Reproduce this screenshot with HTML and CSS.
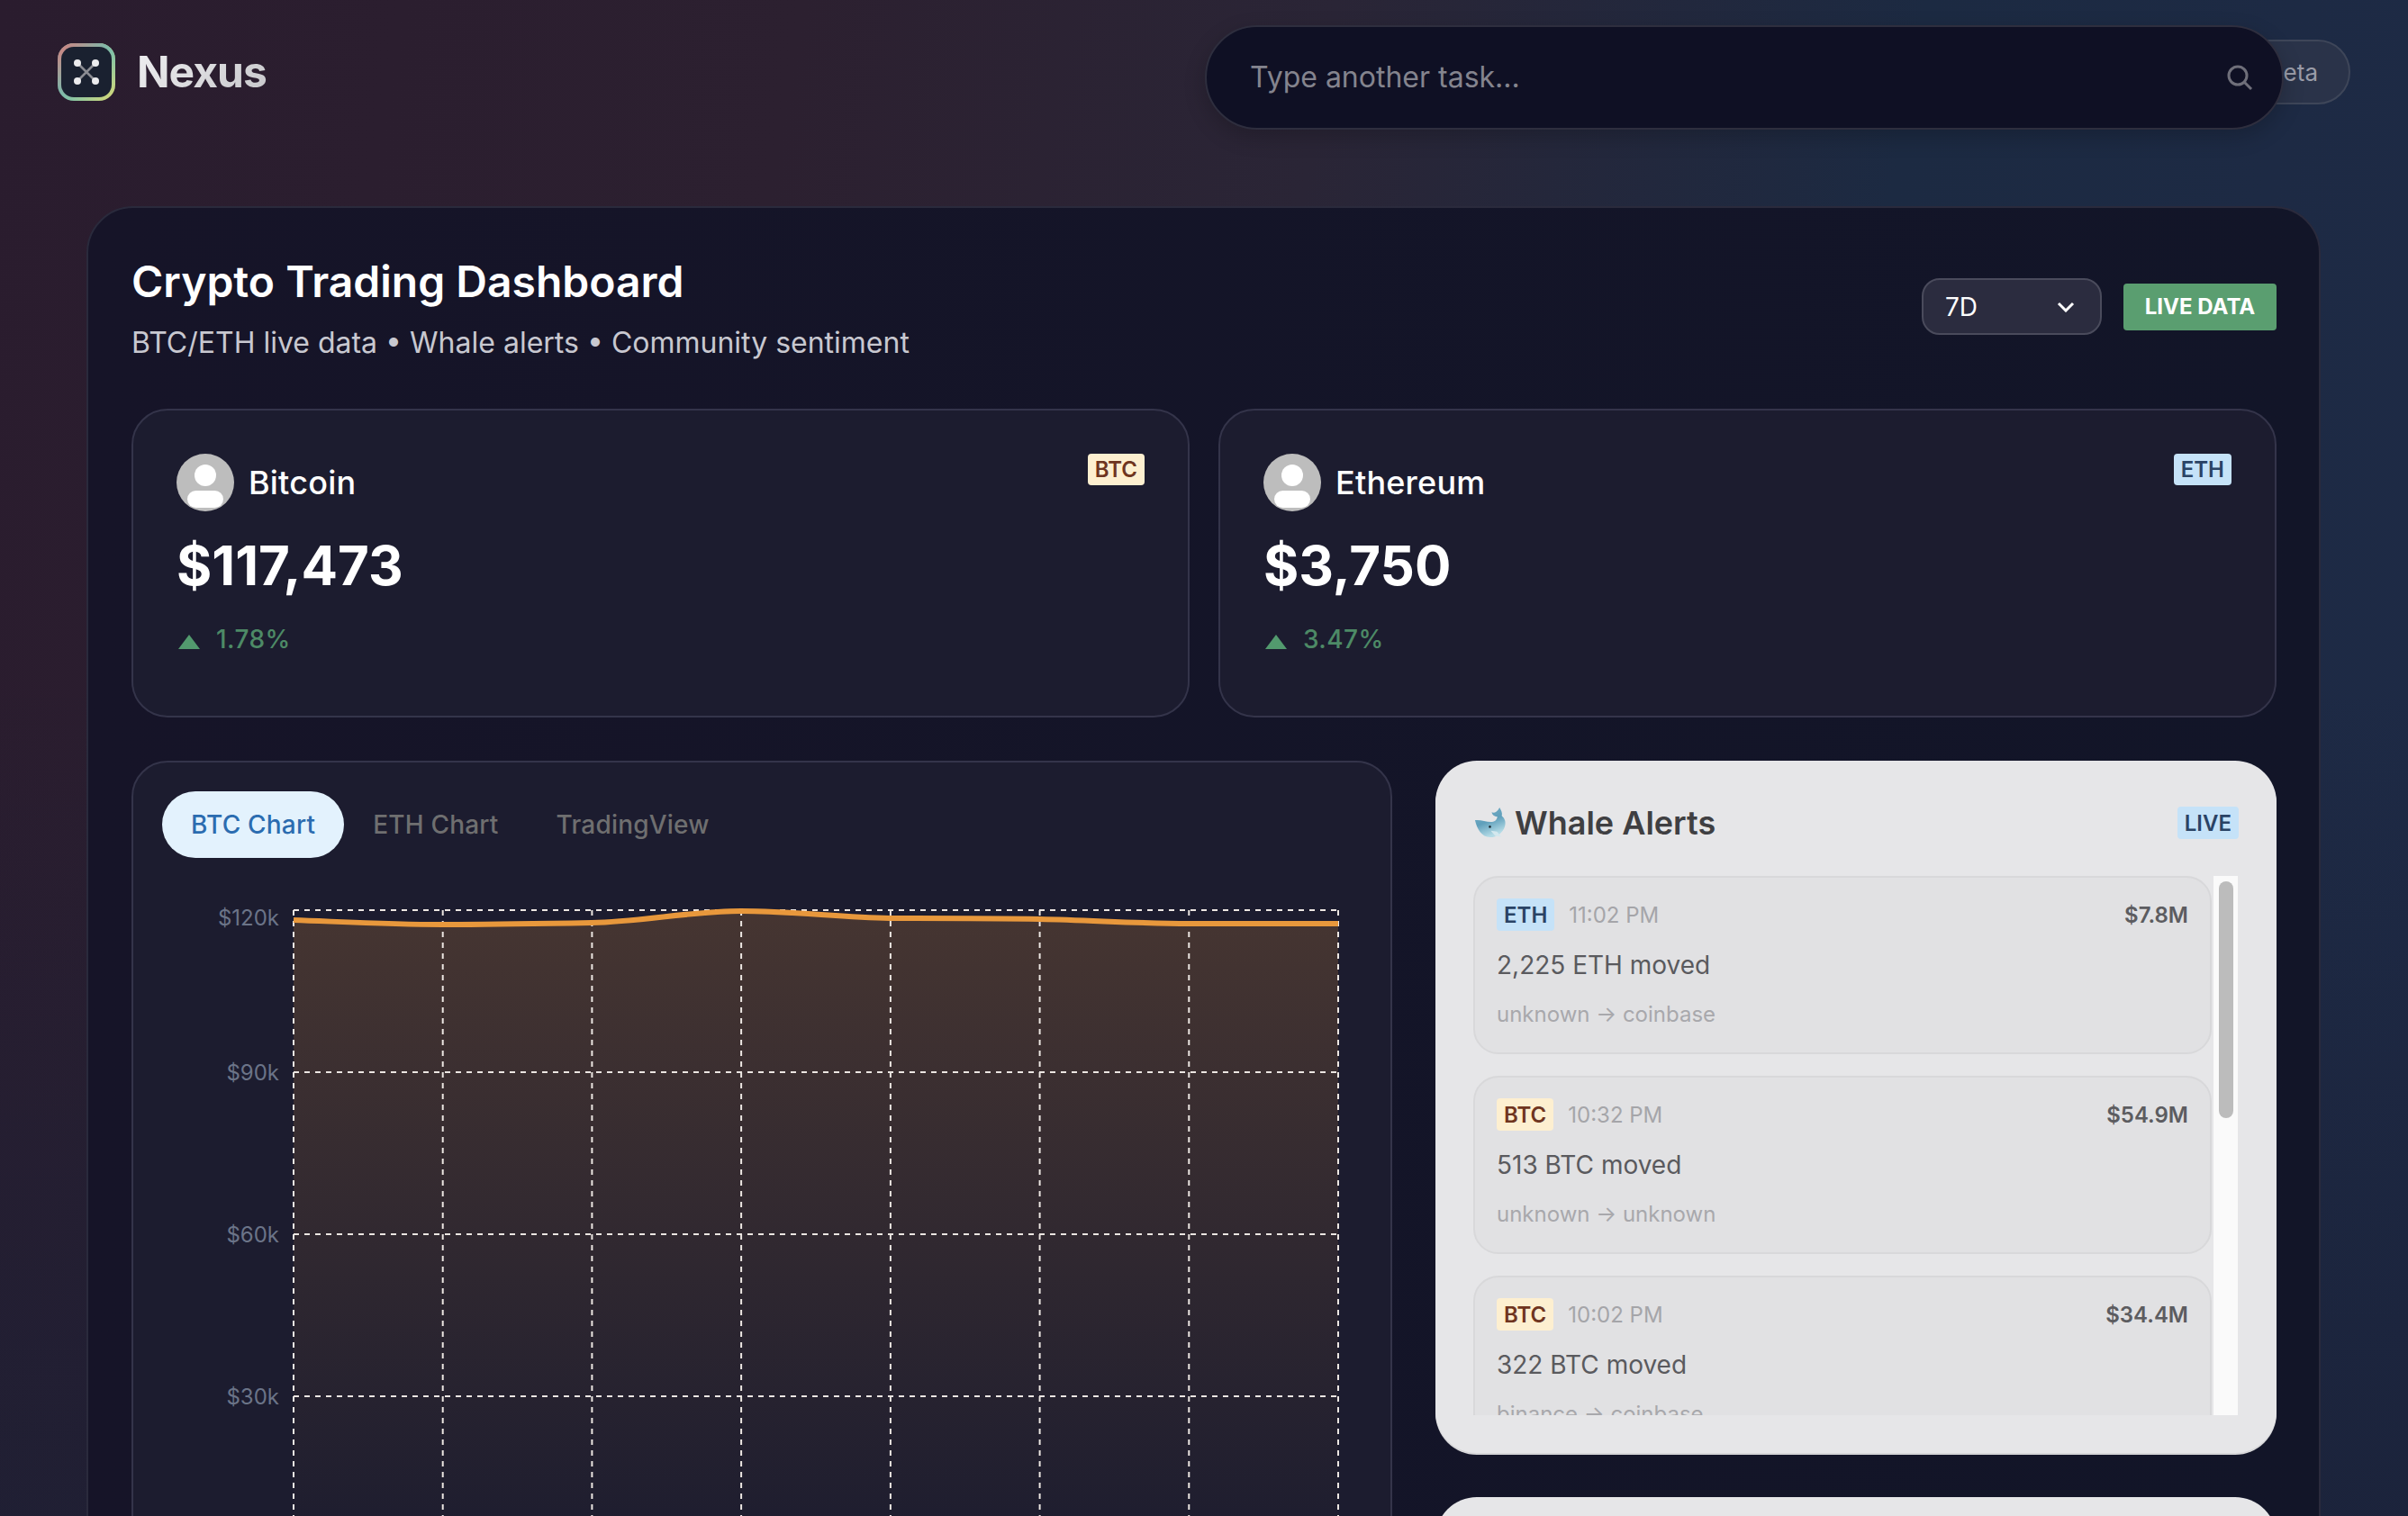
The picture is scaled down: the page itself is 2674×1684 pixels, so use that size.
FILE: index.html
```html
<!DOCTYPE html>
<html lang="en">
<head>
<meta charset="utf-8">
<title>Nexus</title>
<link rel="stylesheet" href="styles.css">
</head>
<body>
<header class="topbar">
  <div class="brand">
    <svg class="logo" viewBox="0 0 64 64" aria-hidden="true">
      <defs>
        <linearGradient id="lgA" x1="0" y1="0" x2="1" y2="0"><stop offset="0" stop-color="#d87c7c"/><stop offset="1" stop-color="#6cc0b4"/></linearGradient>
        <linearGradient id="lgB" x1="0" y1="0" x2="1" y2="0"><stop offset="0" stop-color="#6cc0b4"/><stop offset="1" stop-color="#dcdc74"/></linearGradient>
        <linearGradient id="lgFrame" x1="0" y1="0" x2="0" y2="1"><stop offset="0" stop-color="#fff"/><stop offset="1" stop-color="#000"/></linearGradient>
        <mask id="lgMask"><rect width="64" height="64" fill="url(#lgFrame)"/></mask>
      </defs>
      <rect width="64" height="64" rx="18" fill="url(#lgB)"/>
      <rect width="64" height="64" rx="18" fill="url(#lgA)" mask="url(#lgMask)"/>
      <rect x="4" y="4" width="56" height="56" rx="14" fill="#1a2130"/>
      <path d="M22 22 42 42M42 22 22 42" stroke="#8b8c92" stroke-width="2.5"/>
      <circle cx="22" cy="22" r="4" fill="#ececee"/><circle cx="42" cy="22" r="4" fill="#ececee"/>
      <circle cx="22" cy="42" r="4" fill="#ececee"/><circle cx="42" cy="42" r="4" fill="#ececee"/>
    </svg>
    <span class="brand-name">Nexus</span>
  </div>
  <span class="beta-pill">Beta</span>
  <div class="search">
    <span class="search-text">Type another task...</span>
    <svg class="search-icon" viewBox="0 0 30 30" aria-hidden="true"><circle cx="13" cy="13" r="10"/><path d="M20.500 20.500 28 28"/></svg>
  </div>
</header>

<main class="dash">
  <div class="dash-head">
    <div>
      <h1 class="dash-title">Crypto Trading Dashboard</h1>
      <p class="dash-sub">BTC/ETH live data • Whale alerts • Community sentiment</p>
    </div>
    <div class="dash-actions">
      <div class="select"><span>7D</span>
        <svg class="chev" viewBox="0 0 20 12" aria-hidden="true"><path d="M2 2 10 10 18 2"/></svg>
      </div>
      <span class="live-data">LIVE DATA</span>
    </div>
  </div>

  <section class="coins">
    <article class="coin">
      <div class="coin-top">
        <div class="coin-id">
          <svg class="avatar" viewBox="0 0 64 64" aria-hidden="true"><circle cx="32" cy="32" r="32" fill="#bdbdbd"/><circle cx="32" cy="24" r="12" fill="#fff"/><rect x="12" y="41" width="40" height="19" rx="9.5" fill="#fff"/></svg>
          <span class="coin-name">Bitcoin</span>
        </div>
        <span class="tag tag-btc">BTC</span>
      </div>
      <div class="coin-price">$117,473</div>
      <div class="coin-change"><i class="tri"></i>1.78%</div>
    </article>
    <article class="coin">
      <div class="coin-top">
        <div class="coin-id">
          <svg class="avatar" viewBox="0 0 64 64" aria-hidden="true"><circle cx="32" cy="32" r="32" fill="#bdbdbd"/><circle cx="32" cy="24" r="12" fill="#fff"/><rect x="12" y="41" width="40" height="19" rx="9.5" fill="#fff"/></svg>
          <span class="coin-name">Ethereum</span>
        </div>
        <span class="tag tag-eth">ETH</span>
      </div>
      <div class="coin-price">$3,750</div>
      <div class="coin-change"><i class="tri"></i>3.47%</div>
    </article>
  </section>

  <section class="lower">
    <div class="chart-panel">
      <nav class="tabs">
        <span class="tab tab-on">BTC Chart</span>
        <span class="tab">ETH Chart</span>
        <span class="tab">TradingView</span>
      </nav>
      <svg class="chart" viewBox="180 984 1332 760">
        <defs>
          <linearGradient id="area" x1="0" y1="1012" x2="0" y2="1732" gradientUnits="userSpaceOnUse">
            <stop offset="0" stop-color="#ed9a3a" stop-opacity=".2"/>
            <stop offset="1" stop-color="#ed9a3a" stop-opacity="0"/>
          </linearGradient>
        </defs>
        <path fill="url(#area)" d="M326 1023C381 1025 436 1028 491 1028C547 1028 602 1027 657 1026C712 1025 768 1013 823 1013C878 1013 933 1020 988 1021C1044 1021 1099 1021 1155 1022C1210 1023 1265 1027 1320 1027C1375 1027 1431 1027 1486 1027V1744H326Z"/>
        <g class="grid">
          <path d="M326 1012H1486M326 1192H1486M326 1372H1486M326 1552H1486"/>
          <path d="M326 1012V1744M491.700 1012V1744M657.400 1012V1744M823.100 1012V1744M988.900 1012V1744M1154.600 1012V1744M1320.300 1012V1744M1486 1012V1744"/>
        </g>
        <path class="line" d="M326 1023C381 1025 436 1028 491 1028C547 1028 602 1027 657 1026C712 1025 768 1013 823 1013C878 1013 933 1020 988 1021C1044 1021 1099 1021 1155 1022C1210 1023 1265 1027 1320 1027C1375 1027 1431 1027 1486 1027"/>
        <g class="ticks">
          <text x="310" y="1029">$120k</text>
          <text x="310" y="1201">$90k</text>
          <text x="310" y="1381">$60k</text>
          <text x="310" y="1561">$30k</text>
        </g>
      </svg>
    </div>

    <aside class="side">
      <div class="whale-panel">
        <div class="whale-head">
          <h2 class="whale-title">
            <svg class="whale-icon" viewBox="16 16 38 36" aria-hidden="true">
              <defs><linearGradient id="wh" x1="0" y1="0" x2=".4" y2="1"><stop offset="0" stop-color="#79b0c6"/><stop offset=".55" stop-color="#5f9fbb"/><stop offset="1" stop-color="#b4dbe6"/></linearGradient></defs>
              <path fill="url(#wh)" d="M18 31C24 30 30 33 36 33 40 33 43 31 43.500 27 40 27 37.500 25 37 22 40 23 43 22 46 16.500 48 20 49.500 23 48.500 26 52 29 53.500 33 52 38 50 45 43 50.500 35 50.500 26 50.500 20 41 18 31Z"/>
              <path fill="#d4e8ee" d="M36 43 43 44 48 50 41 49Z"/>
              <circle cx="35" cy="38.500" r="1.300" fill="#1c2a33"/>
            </svg>
            Whale Alerts
          </h2>
          <span class="tag-live">LIVE</span>
        </div>
        <div class="feed">
          <div class="feed-items">
            <div class="alert">
              <div class="alert-top"><span class="chip chip-eth">ETH</span><span class="alert-time">11:02 PM</span><span class="alert-amt">$7.8M</span></div>
              <div class="alert-main">2,225 ETH moved</div>
              <div class="alert-path">unknown → coinbase</div>
            </div>
            <div class="alert">
              <div class="alert-top"><span class="chip chip-btc">BTC</span><span class="alert-time">10:32 PM</span><span class="alert-amt">$54.9M</span></div>
              <div class="alert-main">513 BTC moved</div>
              <div class="alert-path">unknown → unknown</div>
            </div>
            <div class="alert">
              <div class="alert-top"><span class="chip chip-btc">BTC</span><span class="alert-time">10:02 PM</span><span class="alert-amt">$34.4M</span></div>
              <div class="alert-main">322 BTC moved</div>
              <div class="alert-path">binance → coinbase</div>
            </div>
          </div>
          <div class="track"><div class="thumb"></div></div>
        </div>
      </div>
      <div class="next-panel"></div>
    </aside>
  </section>
</main>
</body>
</html>
```

FILE: styles.css
```css
* { box-sizing: border-box; }
html, body { height: 100%; }
body {
  margin: 0;
  height: 1684px;
  overflow: hidden;
  font-family: Inter, "Liberation Sans", sans-serif;
  color: #fff;
  background:
    linear-gradient(180deg, rgba(26, 32, 54, 0) 45%, rgba(26, 32, 54, .65) 100%),
    linear-gradient(100deg, #2a1c2e 0%, #2c2030 30%, #2a2536 50%, #1c2a42 72%, #1e2a46 100%);
}

/* top bar */
.topbar {
  position: relative;
  height: 229px;
  padding: 44px 64px 0 64px;
  display: flex;
  justify-content: space-between;
  align-items: flex-start;
}
.brand { display: flex; align-items: center; gap: 24px; margin-top: 4px; }
.logo { width: 64px; height: 64px; display: block; }
.brand-name {
  font-size: 48px;
  font-weight: 700;
  line-height: 64px;
  letter-spacing: -1px;
  background: linear-gradient(135deg, #f0f0f2, #c6c6ca);
  -webkit-background-clip: text;
  background-clip: text;
  color: transparent;
}
.beta-pill {
  height: 72px;
  width: 150px;
  padding-right: 34px;
  border: 2px solid #3e4659;
  border-radius: 36px;
  background: #2a3349;
  color: #9a9ca8;
  font-size: 26px;
  display: flex;
  align-items: center;
  justify-content: flex-end;
}
.search {
  position: absolute;
  left: 1338px;
  top: 28px;
  width: 1198px;
  height: 116px;
  border: 2px solid #2e2e3e;
  border-radius: 58px;
  background: #0f1024;
  box-shadow: 0 8px 24px rgba(0, 0, 0, .2);
  display: flex;
  align-items: center;
  justify-content: space-between;
  padding: 0 32px 1px 48px;
}
.search-text { font-size: 32px; color: #84848e; }
.search-icon { width: 30px; height: 30px; fill: none; stroke: #6f6f7a; stroke-width: 3; }

/* main card */
.dash {
  margin: 0 97px 0 96px;
  height: 1600px;
  padding: 49px 47px 0 48px;
  border: 2px solid #2a2a3c;
  border-radius: 52px;
  background: linear-gradient(90deg, #161428, #121528);
}
.dash-head { display: flex; justify-content: space-between; align-items: center; height: 124px; margin-bottom: 50px; }
.dash-title { margin: 0; font-size: 48px; font-weight: 600; line-height: 64px; }
.dash-sub { margin: 14px 0 0; font-size: 32px; line-height: 44px; color: #c8c8d0; }
.dash-actions { display: flex; align-items: center; gap: 24px; margin-top: -3px; }
.select {
  width: 200px;
  height: 63px;
  padding: 0 28px 0 24px;
  border: 2px solid #4a4b5c;
  border-radius: 20px;
  background: #2b2c3f;
  font-size: 28px;
  display: flex;
  align-items: center;
  justify-content: space-between;
}
.chev { width: 20px; height: 12px; fill: none; stroke: #fff; stroke-width: 3; }
.live-data {
  width: 170px;
  height: 52px;
  border-radius: 4px;
  background: #5a9e70;
  font-size: 24px;
  font-weight: 700;
  display: flex;
  align-items: center;
  justify-content: center;
}

/* coin cards */
.coins { display: grid; grid-template-columns: 1fr 1fr; gap: 32px; }
.coin {
  height: 343px;
  padding: 48px 48px 0;
  border: 2px solid #34344a;
  border-radius: 40px;
  background: #1c1c2f;
}
.coin-top { display: flex; justify-content: space-between; align-items: flex-start; }
.coin-id { display: flex; align-items: center; gap: 16px; }
.avatar { width: 64px; height: 64px; display: block; }
.coin-name { font-size: 36px; font-weight: 500; letter-spacing: .2px; }
.tag {
  height: 35px;
  padding: 0 8px;
  border-radius: 4px;
  font-size: 24px;
  font-weight: 600;
  display: flex;
  align-items: center;
}
.tag-btc { background: #fdefd0; color: #6f3520; }
.tag-eth { background: #c5e2f8; color: #2a4365; }
.coin-price { margin-top: 20px; font-size: 60px; font-weight: 700; line-height: 80px; }
.coin-change {
  margin-top: 22px;
  display: flex;
  align-items: center;
  gap: 18px;
  font-size: 28px;
  font-weight: 500;
  letter-spacing: .4px;
  line-height: 40px;
  color: #4d8a66;
}
.tri {
  width: 24px;
  height: 16px;
  margin: 6px 0 0 2px;
  background: #529a6e;
  clip-path: polygon(50% 0, 100% 100%, 0 100%);
}

/* lower area */
.lower { display: grid; grid-template-columns: 1400px 934px; gap: 48px; margin-top: 48px; align-items: start; }
.chart-panel {
  height: 900px;
  padding: 32px 32px 0;
  border: 2px solid #34344a;
  border-radius: 40px;
  background: #1c1c2f;
}
.tabs { display: flex; }
.tab {
  height: 74px;
  padding: 0 32px;
  border-radius: 37px;
  font-size: 28px;
  font-weight: 500;
  letter-spacing: .2px;
  color: #6f6f70;
  display: flex;
  align-items: center;
}
.tab-on { background: #e3f2fd; color: #2b6cb0; }
.chart { display: block; width: 1332px; height: 760px; margin-top: 30px; overflow: hidden; }
.grid path { fill: none; stroke: #ece6e2; stroke-width: 2; stroke-dasharray: 6 6; }
.line { fill: none; stroke: #e8983c; stroke-width: 6; }
.ticks text { font-family: Inter, "Liberation Sans", sans-serif; font-size: 24px; fill: #6b7488; text-anchor: end; }

/* whale panel */
.side { display: flex; flex-direction: column; gap: 49px; }
.whale-panel {
  height: 769px;
  padding: 50px 42px 0;
  border-radius: 46px;
  background: #e6e6e8;
  box-shadow: 0 2px 0 #d6d6d8;
}
.whale-head { display: flex; justify-content: space-between; align-items: center; height: 38px; }
.whale-title {
  margin: 0;
  display: flex;
  align-items: center;
  gap: 9px;
  font-size: 36px;
  font-weight: 600;
  color: #3f3f42;
}
.whale-icon { width: 37px; height: 36px; display: block; }
.tag-live {
  height: 36px;
  padding: 0 8px;
  border-radius: 4px;
  background: #c5e2f8;
  color: #2a4365;
  font-size: 24px;
  font-weight: 600;
  display: flex;
  align-items: center;
}
.feed { display: flex; height: 599px; margin-top: 40px; overflow: hidden; }
.feed-items { width: 820px; margin-right: 2px; display: flex; flex-direction: column; gap: 24px; }
.alert {
  flex: none;
  height: 198px;
  padding: 23px 24px 0 24px;
  border: 2px solid #d8d8da;
  border-radius: 28px;
  background: #e1e1e3;
}
.alert-top { display: flex; align-items: center; height: 36px; }
.chip {
  height: 36px;
  padding: 0 8px;
  border-radius: 4px;
  font-size: 24px;
  font-weight: 600;
  display: flex;
  align-items: center;
}
.chip-eth { background: #c5e2f8; color: #2a4365; }
.chip-btc { background: #fdefd0; color: #6f3520; }
.alert-time { margin-left: 16px; font-size: 24px; color: #a5a5a9; }
.alert-amt { margin-left: auto; font-size: 24px; font-weight: 600; color: #5c5c60; }
.alert-main { margin-top: 20px; font-size: 28px; line-height: 36px; color: #5a5a5e; }
.alert-path { margin-top: 20px; font-size: 24px; line-height: 34px; color: #a8a8ac; }
.track { flex: none; width: 27px; padding: 6px 5px 0 6px; background: #fafafa; }
.thumb { height: 263px; border-radius: 8px; background: #bcbcbc; }
.next-panel { height: 200px; border-radius: 46px; background: #e6e6e8; }
```
